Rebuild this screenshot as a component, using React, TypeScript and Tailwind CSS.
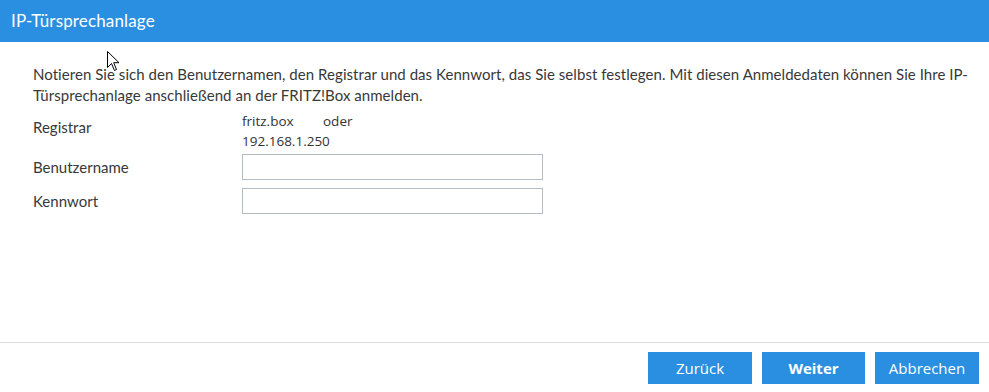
const body = { fontFamily: 'Lato, "Open Sans", sans-serif' };
const seg = { fontFamily: '"Open Sans", "Noto Sans", sans-serif' };

function Cursor() {
  return (
    <svg
      className="pointer-events-none absolute left-[107px] top-[51px]"
      width="13"
      height="21"
      viewBox="0 0 13 21"
      aria-hidden="true"
    >
      <path
        d="M0.5 0.5 L0.5 16.5 L4.5 12.5 L7.5 19.5 L9.5 18.5 L6.7 11.7 L12 11.7 Z"
        fill="#fff"
        stroke="#000"
        strokeWidth="1"
        strokeLinejoin="miter"
      />
    </svg>
  );
}

function Row({ label, children }: { label: string; children: React.ReactNode }) {
  return (
    <div className="grid grid-cols-[209px_302px] items-center">
      <span>{label}</span>
      {children}
    </div>
  );
}

export default function App() {
  return (
    <div className="relative flex h-[392px] w-[989px] flex-col bg-white text-[#383838]" style={body}>
      <div className="flex h-[42px] items-center bg-[#2a8fe0] px-[11px] text-[17px] tracking-[0.15px] text-white">
        IP-Türsprechanlage
      </div>

      <div className="flex-1 pl-[33px] pr-[12px] pt-[22px] text-[15px]">
        <p className="leading-[21px] tracking-[0.05px]">
          Notieren Sie sich den Benutzernamen, den Registrar und das Kennwort, das Sie selbst festlegen. Mit diesen
          Anmeldedaten können Sie Ihre IP-Türsprechanlage anschließend an der FRITZ!Box anmelden.
        </p>

        <div className="mt-[5px] grid grid-cols-[209px_302px] items-start">
          <span className="pt-[5px]">Registrar</span>
          <div className="text-[13.5px] leading-[20px] text-[#333]" style={seg}>
            <div className="flex">
              <span className="w-[81px]">fritz.box</span>
              <span>oder</span>
            </div>
            <div>192.168.1.250</div>
          </div>
        </div>

        <div className="mt-[3px] flex flex-col gap-[8px]">
          <Row label="Benutzername">
            <input className="h-[26px] w-[301px] border border-[#b4bcc4] bg-white px-2 outline-none" />
          </Row>
          <Row label="Kennwort">
            <input
              type="password"
              className="h-[26px] w-[301px] border border-[#b4bcc4] bg-white px-2 outline-none"
            />
          </Row>
        </div>
      </div>

      <div className="flex h-[50px] justify-end gap-[10px] border-t border-[#dcdcdc] pr-[10px] pt-[9px]" style={seg}>
        <button className="h-[32px] w-[104px] bg-[#2a8fe0] text-[15px] text-white">Zurück</button>
        <button className="h-[32px] w-[103px] bg-[#2a8fe0] text-[15px] font-bold text-white">Weiter</button>
        <button className="h-[32px] w-[104px] bg-[#2a8fe0] text-[15px] text-white">Abbrechen</button>
      </div>

      <Cursor />
    </div>
  );
}
